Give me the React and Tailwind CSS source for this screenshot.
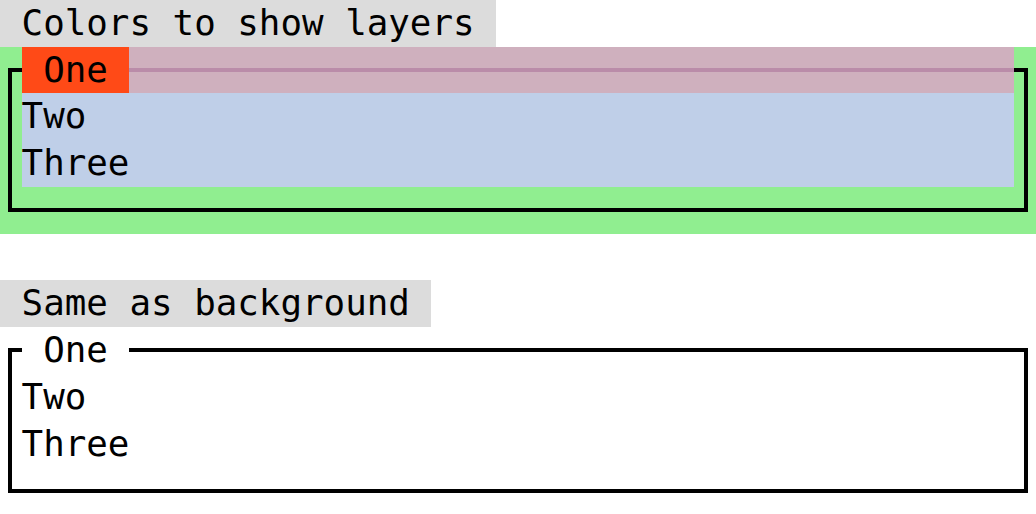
const ROW = "h-[46.73px] leading-[46.73px]";

function Title({ children }) {
  return (
    <div className={`flex ${ROW}`}>
      <span className="bg-[#dcdcdc] px-[21.58px] whitespace-pre">{children}</span>
    </div>
  );
}

function FieldBox({ outer, legend, top, body }) {
  return (
    <div className={`grid h-[186.92px] ${outer}`}>
      {/* border drawn through the middle of the edge cells */}
      <div className="col-start-1 row-start-1 mx-[8px] my-[21.4px] border-4 border-black" />
      <div className="col-start-1 row-start-1 mx-[21.58px] flex flex-col">
        <div className={`flex ${ROW} ${top}`}>
          <span className={`px-[21.58px] ${legend}`}>One</span>
        </div>
        <div className={body}>
          <div className={ROW}>Two</div>
          <div className={ROW}>Three</div>
        </div>
      </div>
    </div>
  );
}

export default function App() {
  return (
    <div
      className="w-[1036px] h-[514px] bg-white text-black text-[35.85px] overflow-hidden"
      style={{ fontFamily: '"DejaVu Sans Mono", "Liberation Mono", monospace' }}
    >
      <Title>Colors to show layers</Title>
      <FieldBox
        outer="bg-[#90ee90]"
        legend="bg-[#ff4a17]"
        top="bg-[#daa4c7]/85"
        body="bg-[#bfcfe8]"
      />
      <div className="h-[46.73px]" />
      <Title>Same as background</Title>
      <FieldBox outer="bg-white" legend="bg-white" top="" body="" />
    </div>
  );
}
